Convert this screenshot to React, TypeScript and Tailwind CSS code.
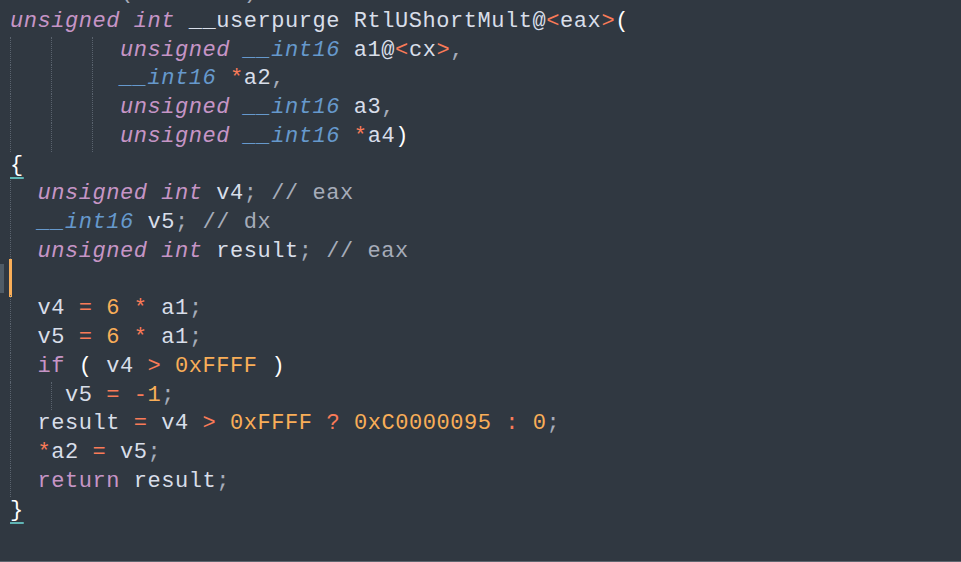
import React from "react";

type Tok = [string, string];

const C: Record<string, string> = {
  k: "text-[#c695c6] italic",
  t: "text-[#6699cc] italic",
  kw: "text-[#c695c6]",
  o: "text-[#f97b58]",
  n: "text-[#f9ae58]",
  i: "text-[#d8dee9]",
  p: "text-[#a6acb9]",
  c: "text-[#a6acb9]",
  b: "text-[#ffffff]",
  u: "text-[#ffffff] underline decoration-2 underline-offset-[6px] decoration-[#5fb4b4]",
  s: "",
};

const lines: { toks: Tok[]; guides?: number[]; cursor?: boolean }[] = [
  { toks: [["c", "//----- (00000000) --------------------------------------------------------"]] },
  {
    toks: [
      ["k", "unsigned int"],
      ["i", " __userpurge RtlUShortMult@"],
      ["o", "<"],
      ["i", "eax"],
      ["o", ">"],
      ["b", "("],
    ],
  },
  {
    guides: [0, 3, 6],
    toks: [
      ["s", "        "],
      ["k", "unsigned"],
      ["s", " "],
      ["t", "__int16"],
      ["i", " a1@"],
      ["o", "<"],
      ["i", "cx"],
      ["o", ">"],
      ["p", ","],
    ],
  },
  {
    guides: [0, 3, 6],
    toks: [
      ["s", "        "],
      ["t", "__int16"],
      ["s", " "],
      ["o", "*"],
      ["i", "a2"],
      ["p", ","],
    ],
  },
  {
    guides: [0, 3, 6],
    toks: [
      ["s", "        "],
      ["k", "unsigned"],
      ["s", " "],
      ["t", "__int16"],
      ["i", " a3"],
      ["p", ","],
    ],
  },
  {
    guides: [0, 3, 6],
    toks: [
      ["s", "        "],
      ["k", "unsigned"],
      ["s", " "],
      ["t", "__int16"],
      ["s", " "],
      ["o", "*"],
      ["i", "a4"],
      ["b", ")"],
    ],
  },
  { toks: [["u", "{"]] },
  {
    guides: [0],
    toks: [
      ["s", "  "],
      ["k", "unsigned int"],
      ["i", " v4"],
      ["p", ";"],
      ["c", " // eax"],
    ],
  },
  {
    guides: [0],
    toks: [
      ["s", "  "],
      ["t", "__int16"],
      ["i", " v5"],
      ["p", ";"],
      ["c", " // dx"],
    ],
  },
  {
    guides: [0],
    toks: [
      ["s", "  "],
      ["k", "unsigned int"],
      ["i", " result"],
      ["p", ";"],
      ["c", " // eax"],
    ],
  },
  { guides: [0], cursor: true, toks: [["s", " "]] },
  {
    guides: [0],
    toks: [
      ["s", "  "],
      ["i", "v4 "],
      ["o", "="],
      ["s", " "],
      ["n", "6"],
      ["s", " "],
      ["o", "*"],
      ["i", " a1"],
      ["p", ";"],
    ],
  },
  {
    guides: [0],
    toks: [
      ["s", "  "],
      ["i", "v5 "],
      ["o", "="],
      ["s", " "],
      ["n", "6"],
      ["s", " "],
      ["o", "*"],
      ["i", " a1"],
      ["p", ";"],
    ],
  },
  {
    guides: [0],
    toks: [
      ["s", "  "],
      ["kw", "if"],
      ["s", " "],
      ["b", "("],
      ["i", " v4 "],
      ["o", ">"],
      ["s", " "],
      ["n", "0xFFFF"],
      ["s", " "],
      ["b", ")"],
    ],
  },
  {
    guides: [0, 3],
    toks: [
      ["s", "    "],
      ["i", "v5 "],
      ["o", "="],
      ["s", " "],
      ["o", "-"],
      ["n", "1"],
      ["p", ";"],
    ],
  },
  {
    guides: [0],
    toks: [
      ["s", "  "],
      ["i", "result "],
      ["o", "="],
      ["i", " v4 "],
      ["o", ">"],
      ["s", " "],
      ["n", "0xFFFF"],
      ["s", " "],
      ["o", "?"],
      ["s", " "],
      ["n", "0xC0000095"],
      ["s", " "],
      ["o", ":"],
      ["s", " "],
      ["n", "0"],
      ["p", ";"],
    ],
  },
  {
    guides: [0],
    toks: [
      ["s", "  "],
      ["o", "*"],
      ["i", "a2 "],
      ["o", "="],
      ["i", " v5"],
      ["p", ";"],
    ],
  },
  {
    guides: [0],
    toks: [
      ["s", "  "],
      ["kw", "return"],
      ["i", " result"],
      ["p", ";"],
    ],
  },
  { toks: [["u", "}"]] },
];

const guideLeft: Record<number, string> = {
  0: "left-[10px]",
  3: "left-[51px]",
  6: "left-[92px]",
};

export default function App() {
  return (
    <div className="w-[961px] h-[562px] overflow-hidden bg-[#303841] border-b border-[#5f6670]">
      <div
        className="mt-[-21px] text-[22px] tracking-[0.55px]"
        style={{ fontFamily: '"Liberation Mono", "DejaVu Sans Mono", monospace' }}
      >
        {lines.map((ln, idx) => (
          <div key={idx} className="relative h-[28.76px] leading-[28.76px] pl-[10px] whitespace-pre">
            {ln.guides?.map((g) => (
              <span
                key={g}
                className={`absolute top-0 bottom-0 w-0 border-l border-dotted border-[#5a636e] ${guideLeft[g]}`}
              />
            ))}
            {ln.cursor && (
              <>
                <span className="absolute left-0 top-[-3px] w-[4px] h-[29px] bg-[#4f5b66]" />
                <span className="absolute left-[9px] top-[-8px] w-[3px] h-[38px] bg-[#f9ae58]" />
              </>
            )}
            {ln.toks.map(([k, txt], j) => (
              <span key={j} className={C[k]}>
                {txt}
              </span>
            ))}
          </div>
        ))}
      </div>
    </div>
  );
}
